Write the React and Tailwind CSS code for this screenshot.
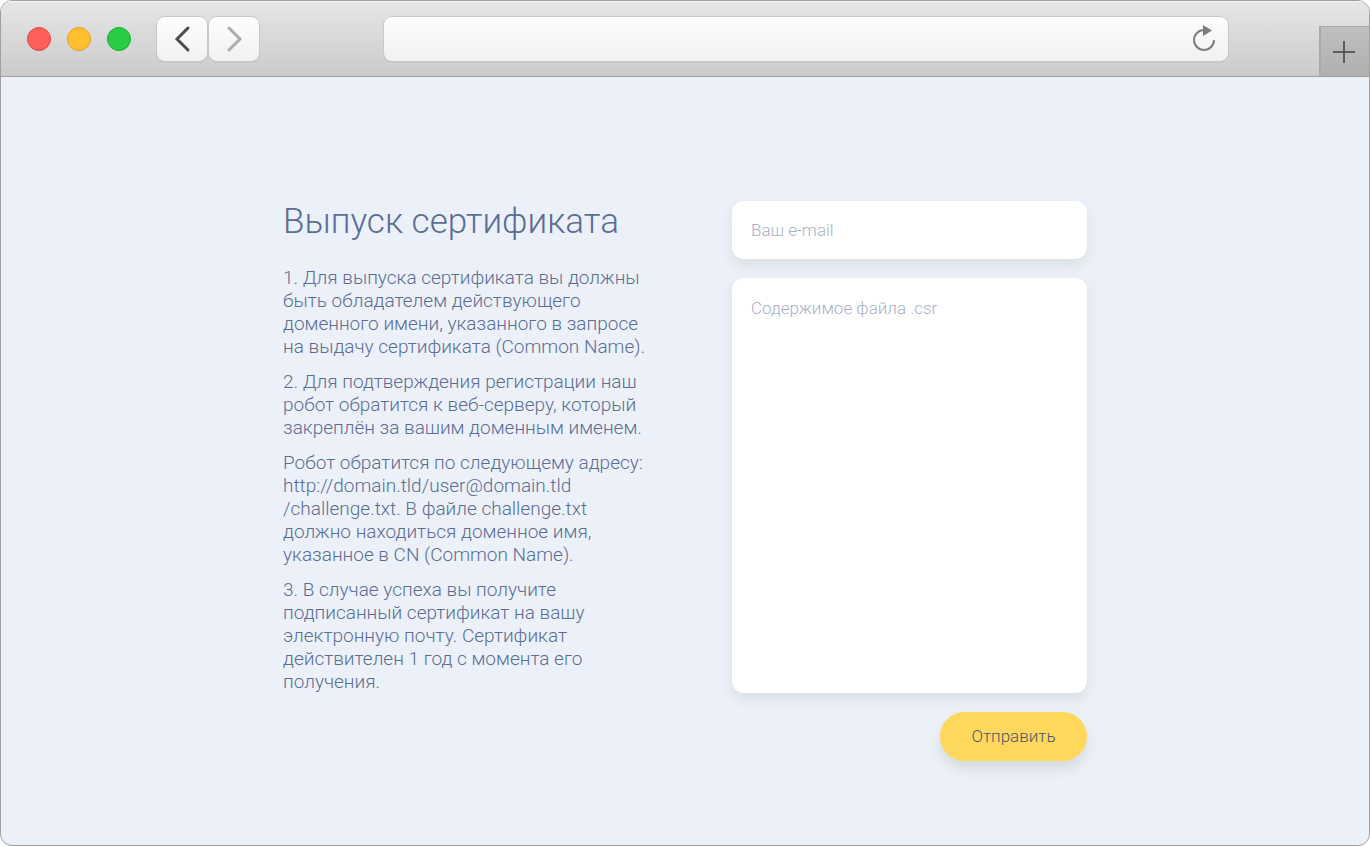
import React, { useState } from "react";

const steps = [
  "1. Для выпуска сертификата вы должны быть обладателем действующего доменного имени, указанного в запросе на выдачу сертификата (Common Name).",
  "2. Для подтверждения регистрации наш робот обратится к веб-серверу, который закреплён за вашим доменным именем.",
  <>
    Робот обратится по следующему адресу: http://domain.tld/user@domain.tld
    <br />
    /challenge.txt. В файле challenge.txt должно находиться доменное имя,
    указанное в CN (Common Name).
  </>,
  "3. В случае успеха вы получите подписанный сертификат на вашу электронную почту. Сертификат действителен 1 год с момента его получения.",
];

function NavButton({ label, color, d }) {
  return (
    <button
      type="button"
      aria-label={label}
      className={`flex h-11 w-[50px] items-center justify-center rounded-lg bg-linear-to-b from-[#fdfdfd] to-[#f1f1f1] shadow-[0_0_0_1px_#c8c8c8,0_1px_1px_#a8a8a8] ${color}`}
    >
      <svg width="24" height="28" viewBox="0 0 24 28" fill="none" aria-hidden="true">
        <path d={d} stroke="currentColor" strokeWidth="3" strokeLinecap="round" />
      </svg>
    </button>
  );
}

function BrowserBar() {
  return (
    <header className="flex h-[76px] items-start border-b border-[#a0a0a0] bg-linear-to-b from-[#e6e6e6] to-[#cbcbcb] pl-[26px] shadow-[inset_0_1px_0_#f6f6f6]">
      <div className="flex gap-4 pt-[26px]">
        <span className="size-6 rounded-full border border-[#e2463f] bg-[#ff615a]" />
        <span className="size-6 rounded-full border border-[#e0a028] bg-[#ffbf2f]" />
        <span className="size-6 rounded-full border border-[#1dad2b] bg-[#29cc42]" />
      </div>
      <div className="ml-[26px] flex gap-0.5 pt-4">
        <NavButton label="Назад" color="text-[#4d4d4d]" d="M18 3 L7 14 L18 25" />
        <NavButton label="Вперёд" color="text-[#adadad]" d="M7 3 L18 14 L7 25" />
      </div>
      <div className="mt-4 mr-[91px] ml-[125px] flex h-11 flex-1 items-center rounded-lg bg-linear-to-b from-[#fdfdfd] to-[#f1f1f1] pr-3 shadow-[0_0_0_1px_#c8c8c8,0_1px_1px_#a8a8a8]">
        <input type="text" aria-label="Адрес" className="h-full min-w-0 flex-1 px-3 outline-none" />
        <button type="button" aria-label="Обновить" className="text-[#7d7d7d]">
          <svg width="24" height="28" viewBox="0 0 24 28" fill="none" aria-hidden="true">
            <path d="M12 5 A10 10 0 1 0 22 15" stroke="currentColor" strokeWidth="2" />
            <path d="M11 0 V11 L20 5.5 Z" fill="currentColor" />
          </svg>
        </button>
      </div>
      <button
        type="button"
        aria-label="Новая вкладка"
        className="mt-[25px] flex h-[50px] w-[50px] items-center justify-center border-t border-l-2 border-t-[#a9a9a9] border-l-[#a9a9a9] bg-linear-to-b from-[#bfbfbf] to-[#b0b0b0] pr-0.5 text-[#5c5c5c]"
      >
        <svg width="22" height="22" viewBox="0 0 22 22" fill="none" aria-hidden="true">
          <path d="M11 0 V22 M0 11 H22" stroke="currentColor" strokeWidth="2" />
        </svg>
      </button>
    </header>
  );
}

export default function App() {
  const [email, setEmail] = useState("");
  const [csr, setCsr] = useState("");

  return (
    <div className="flex min-h-screen flex-col overflow-hidden rounded-xl border border-[#a0a0a0] bg-[#ecf1f9] font-['Roboto',sans-serif] font-light text-[#5b6d95]">
      <BrowserBar />
      <main className="mx-auto grid w-full max-w-[804px] flex-1 grid-cols-[370px_355px] content-start justify-between pt-[124px]">
        <section>
          <h1 className="text-[35px] leading-[42px]">Выпуск сертификата</h1>
          <div className="mt-[23px] flex flex-col gap-3 text-[19px] leading-[23px]">
            {steps.map((step, i) => (
              <p key={i}>{step}</p>
            ))}
          </div>
        </section>

        <form className="flex flex-col" onSubmit={(e) => e.preventDefault()}>
          <input
            type="email"
            aria-label="Ваш e-mail"
            placeholder="Ваш e-mail"
            value={email}
            onChange={(e) => setEmail(e.target.value)}
            className="h-[58px] rounded-xl bg-white px-[19px] text-[17px] shadow-[0_6px_12px_rgba(150,160,140,0.22)] outline-none placeholder:text-[#a9b1c6]"
          />
          <textarea
            aria-label="Содержимое файла .csr"
            placeholder="Содержимое файла .csr"
            value={csr}
            onChange={(e) => setCsr(e.target.value)}
            className="mt-[19px] h-[415px] resize-none rounded-xl bg-white px-[19px] py-5 text-[17px] leading-5 shadow-[0_6px_12px_rgba(150,160,140,0.22)] outline-none placeholder:text-[#a9b1c6]"
          />
          <button
            type="submit"
            className="mt-[19px] h-[49px] w-[147px] self-end rounded-full bg-[#fdd85d] text-[17px] text-[#4b5563] shadow-[0_8px_12px_rgba(150,160,140,0.26)]"
          >
            Отправить
          </button>
        </form>
      </main>
    </div>
  );
}
